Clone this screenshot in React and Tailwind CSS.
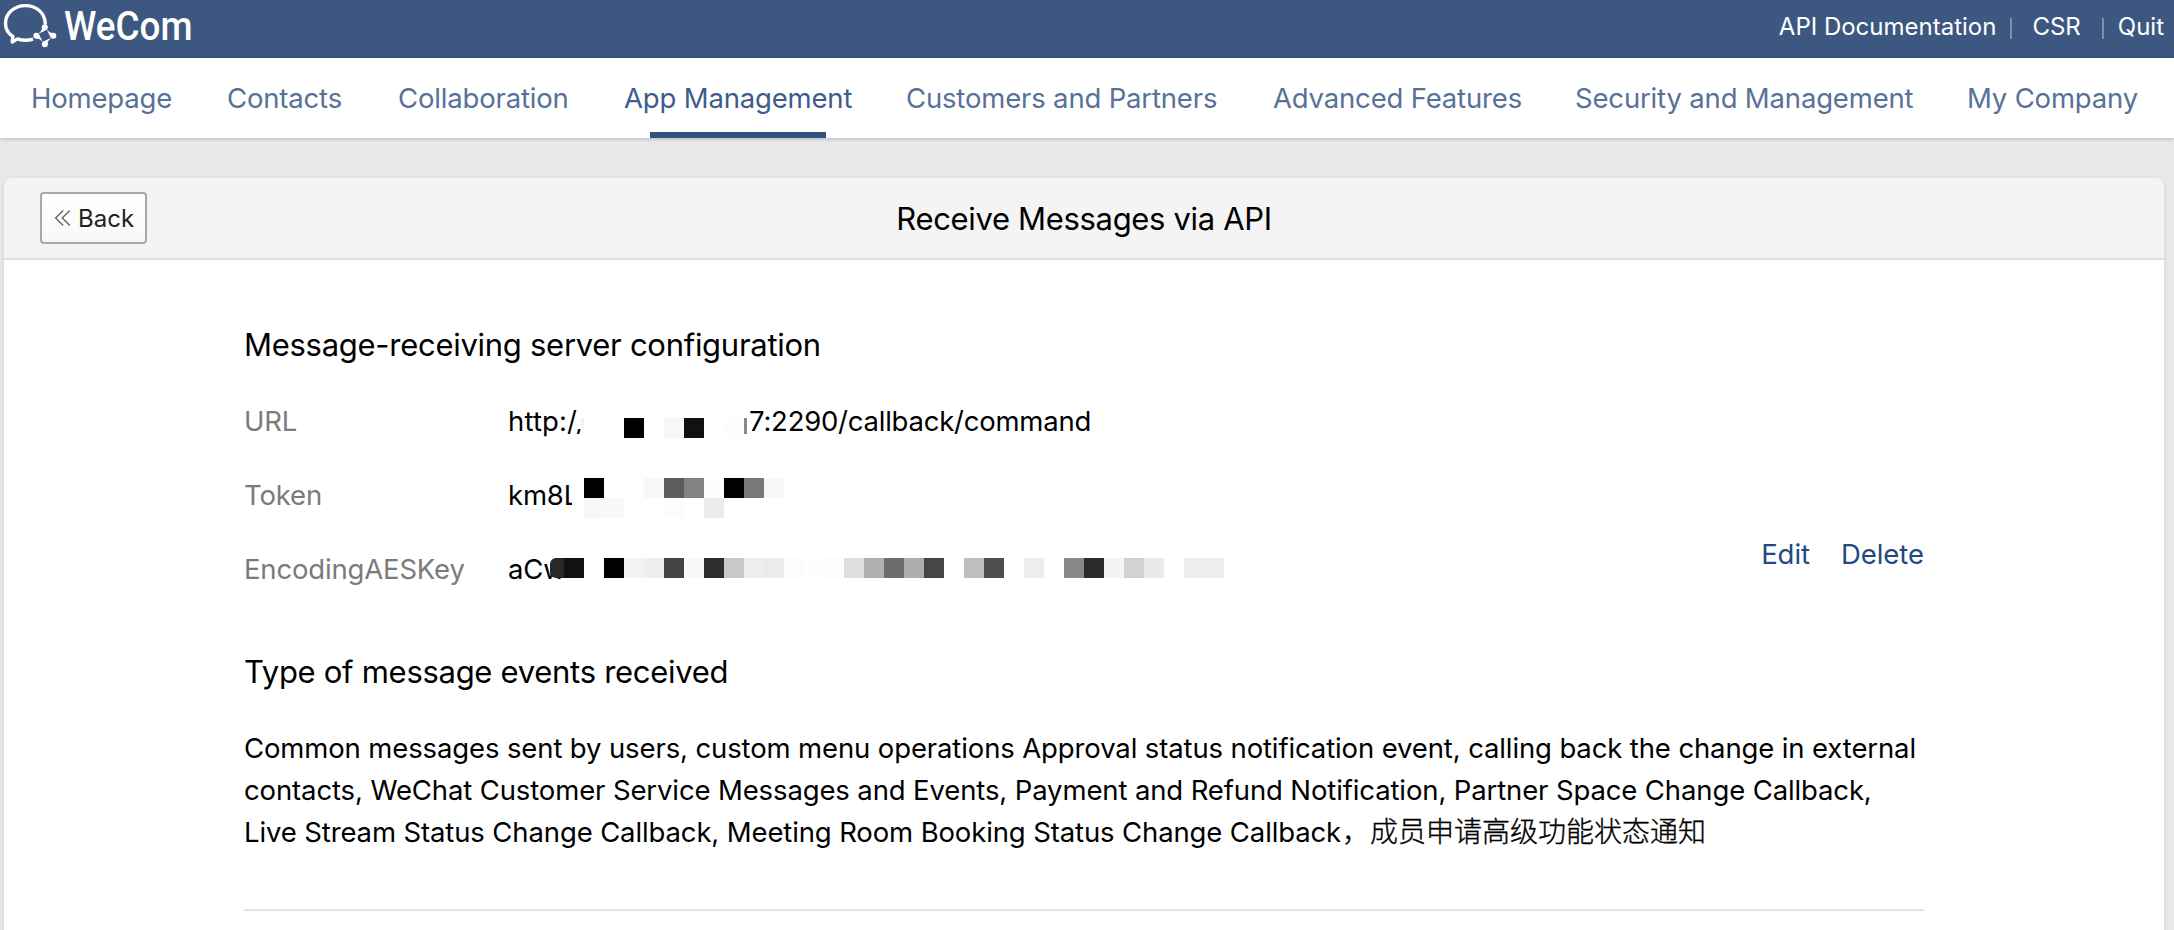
const NAV = [
  { label: "Homepage", width: "w-[196px]" },
  { label: "Contacts", width: "w-[171px]" },
  { label: "Collaboration", width: "w-[226px]" },
  { label: "App Management", width: "w-[282px]", active: true },
  { label: "Customers and Partners", width: "w-[367px]" },
  { label: "Advanced Features", width: "w-[302px]" },
  { label: "Security and Management", width: "w-[392px]" },
  { label: "My Company", width: "w-[180px]" },
];

// Redaction blocks, one 20px cell per colour; null leaves the cell empty.
const URL_MASK = [null, null, "#000000", null, "#f7f7f7", "#111111", null, "#fdfdfd"];
const TOKEN_MASK_TOP = ["#000000", null, null, "#f8f8f8", "#5c5c5c", "#828282", "#fdfdfd", "#000000", "#787878", "#f8f8f8"];
const TOKEN_MASK_BOTTOM = ["#f7f7f7", "#f8f8f8", null, null, "#fcfcfc", null, "#ebebeb"];
const KEY_MASK = [
  "#111111", "#ffffff", "#000000", "#f3f3f3", "#eeeeee", "#444444", "#f9f9f9", "#2d2d2d", "#c8c8c8", "#ededed",
  "#ebebeb", "#fcfcfc", "#fefefe", "#fcfcfc", "#dedede", "#b0b0b0", "#6c6c6c", "#adadad", "#464646", null,
  "#bebebe", "#4e4e4e", null, "#ededed", null, "#888888", "#2a2a2a", "#f4f4f4", "#d2d2d2", "#eaeaea", null,
  "#eeeeee", "#eeeeee",
];

function Cells({ colors }) {
  return (
    <div className="flex">
      {colors.map((c, i) => (
        <span key={i} className="block h-5 w-5 shrink-0" style={{ backgroundColor: c || "transparent" }} />
      ))}
    </div>
  );
}

function Logo() {
  return (
    <div className="flex items-start">
      <svg className="ml-0.5 h-[58px] w-[62px] shrink-0" viewBox="2 0 62 58" fill="none">
        <path
          d="M45.3 24.5 C45.3 13.4 37 5.6 25.4 5.6 C14 5.6 5.5 13.4 5.5 23.4 C5.5 29.4 8.4 33.4 12.9 36.5 L12.2 42 L17.6 38.9 C21.8 40.4 28.2 40.6 33 39.2"
          stroke="#fff"
          strokeWidth="3.4"
          strokeLinejoin="round"
        />
        <g fill="#fff">
          {[0, 90, 180, 270].map((r) => (
            <g key={r} transform={`rotate(${r} 44.8 35.8)`}>
              <circle cx="44.8" cy="27.3" r="3" />
              <path d="M42 26.6 C42.6 30 40.6 31.6 38.3 33.9 C41.4 32.4 43.8 31.6 46.9 29.5 Z" />
            </g>
          ))}
        </g>
      </svg>
      <span className="mt-[7px] origin-left scale-x-[0.92] font-['Roboto',sans-serif] text-[40px] leading-10 font-medium text-white">
        WeCom
      </span>
    </div>
  );
}

function TopBar() {
  return (
    <header className="flex h-[58px] justify-between bg-[#3d5880]">
      <Logo />
      <div className="flex h-[53px] items-center pr-[10px] text-[24px] text-white">
        <a>API Documentation</a>
        <i className="mt-1 ml-[14px] h-[21px] w-0.5 bg-[#7f90ab]" />
        <a className="ml-5">CSR</a>
        <i className="mt-1 ml-[21px] h-[21px] w-0.5 bg-[#7f90ab]" />
        <a className="ml-3.5">Quit</a>
      </div>
    </header>
  );
}

function Nav() {
  return (
    <nav className="relative z-10 flex h-20 bg-white pl-[31px] text-[27.5px] tracking-[-0.17px] text-[#587198] shadow-[0_1px_4px_rgba(0,0,0,0.22)]">
      {NAV.map((item) => (
        <div key={item.label} className={`flex shrink-0 items-center whitespace-nowrap ${item.width}`}>
          {item.active ? (
            <span className="relative flex h-full items-center pt-0.5 text-[#3d5c8c]">
              {item.label}
              <i className="absolute bottom-0 left-[26px] h-1.5 w-[176px] bg-[#35527e]" />
            </span>
          ) : (
            <span className="pt-0.5">{item.label}</span>
          )}
        </div>
      ))}
    </nav>
  );
}

function Row({ label, children }) {
  return (
    <div className="flex h-[74px] items-center">
      <span className="w-[264px] shrink-0 pt-0.5 text-[#7b7b7b]">{label}</span>
      <div className="relative flex h-full items-center whitespace-nowrap">{children}</div>
    </div>
  );
}

export default function App() {
  return (
    <div className="h-[930px] w-[2174px] overflow-hidden bg-[#e8e9eb] font-['Inter','Noto_Sans_CJK_SC',sans-serif] text-black">
      <TopBar />
      <Nav />
      <main className="mt-10 mr-2.5 ml-1 h-[800px] rounded-t-lg bg-white shadow-[0_1px_4px_rgba(0,0,0,0.12)]">
        <div className="grid h-[82px] grid-cols-[1fr_auto_1fr] items-center rounded-t-lg border-b-2 border-[#dadfe4] bg-[#f4f4f4]">
          <button className="ml-9 flex h-[52px] w-[107px] items-center rounded border-2 border-[#a9a9a9] bg-linear-to-b from-white to-[#f8f8f8] pl-3 text-[24px] text-[#222]">
            <svg className="h-[18px] w-[18px] shrink-0" viewBox="0 0 18 18" fill="none" stroke="#666" strokeWidth="1.4">
              <path d="M9.2 1.6 L1.6 9 L9.2 16.4 M15.8 1.6 L8.2 9 L15.8 16.4" />
            </svg>
            <span className="ml-1.5 pt-0.5">Back</span>
          </button>
          <h1 className="pt-0.5 text-[31px] tracking-[-0.33px]">Receive Messages via API</h1>
          <span />
        </div>

        <div className="mr-[240px] ml-[240px] pt-[63px]">
          <h2 className="text-[31px] leading-[44px] tracking-[-0.28px]">Message-receiving server configuration</h2>
          <div className="mt-[17px] flex items-end justify-between text-[27.5px] tracking-[-0.17px]">
            <div>
              <Row label="URL">
                <span className="pt-0.5 tracking-[0.15px]">http:/</span>
                <span className="-ml-px pt-0.5">/</span>
                <span className="absolute top-4 left-[70px] h-[29px] w-3 bg-white" />
                <span className="absolute top-[34px] left-[73px] h-[9px] w-[3px] bg-[#f2f2f2]" />
                <div className="absolute top-[34px] left-[76px]">
                  <Cells colors={URL_MASK} />
                </div>
                <span className="absolute top-[34px] left-[236px] h-4 w-[3px] bg-[#8a8a8a]" />
                <span className="absolute left-[241px] pt-0.5 tracking-[-0.23px]">7:2290/callback/command</span>
              </Row>
              <Row label="Token">
                <span className="pt-0.5">km8</span>
                <span className="w-2 overflow-hidden pt-0.5">L</span>
                <div className="absolute top-5 left-[76px]">
                  <Cells colors={TOKEN_MASK_TOP} />
                  <Cells colors={TOKEN_MASK_BOTTOM} />
                </div>
              </Row>
              <Row label="EncodingAESKey">
                <span className="pt-0.5">aCw</span>
                <div className="absolute top-[26px] left-[42px] flex">
                  <span className="h-5 w-3.5 rounded-l-md bg-[#282828]" />
                  <Cells colors={KEY_MASK} />
                </div>
              </Row>
            </div>
            <div className="mb-[30px] flex gap-[31px] leading-[44px] tracking-[-0.05px] text-[#23497f]">
              <a>Edit</a>
              <a>Delete</a>
            </div>
          </div>

          <h2 className="mt-11 text-[31px] leading-[44px] tracking-[-0.29px]">Type of message events received</h2>
          <p className="mt-[33px] text-[27.5px] leading-[42px] tracking-[-0.125px] whitespace-nowrap">
            Common messages sent by users, custom menu operations Approval status notification event, calling back the change in external
            <br />
            contacts, WeChat Customer Service Messages and Events, Payment and Refund Notification, Partner Space Change Callback,
            <br />
            Live Stream Status Change Callback, Meeting Room Booking Status Change Callback
            <span
              lang="zh-CN"
              className="ml-px font-['Noto_Sans_CJK_SC',sans-serif] text-[28px] leading-none font-light tracking-normal [-webkit-text-stroke:0.35px_#000]"
            >
              ，成员申请高级功能状态通知
            </span>
          </p>
          <div className="mt-14 h-0.5 bg-[#e3e4e8]" />
        </div>
      </main>
    </div>
  );
}
